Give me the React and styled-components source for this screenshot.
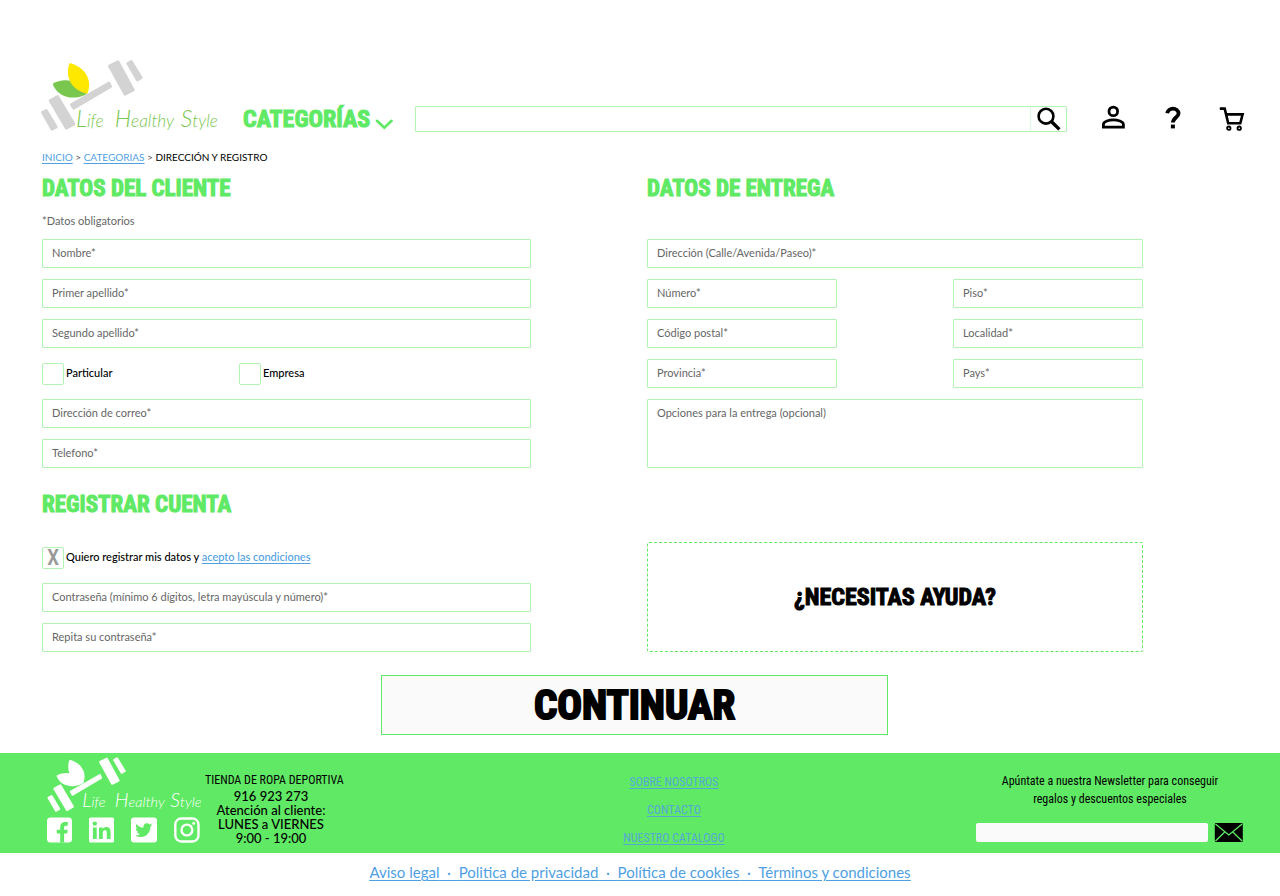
import React from "react";
import styled, { createGlobalStyle, css } from "styled-components";

const green = "#60e964";
const fieldGreen = "#b2f4b4";
const blue = "#4f9fe3";
const condensed = '"Roboto Condensed", "Liberation Sans Narrow", "Liberation Sans", sans-serif';

const GlobalStyle = createGlobalStyle`
  * { box-sizing: border-box; }
  body {
    margin: 0;
    background: #fff;
    color: #000;
    font-family: Lato, "Liberation Sans", sans-serif;
    font-size: 12px;
  }
  h2, p { margin: 0; }
  button { font: inherit; color: inherit; cursor: pointer; }
`;

const heavy = css`
  font-family: ${condensed};
  font-weight: 700;
  -webkit-text-stroke: 1px currentColor;
`;

const Header = styled.header`
  display: flex;
  align-items: flex-end;
  padding: 58px 35px 0 40px;
`;

const LogoLink = styled.a`
  display: block;
  line-height: 0;
`;

const CategoryButton = styled.button`
  ${heavy}
  display: flex;
  align-items: center;
  justify-content: space-between;
  width: 150px;
  height: 28px;
  margin: 0 22px 0 23px;
  padding: 0;
  border: 0;
  background: none;
  color: ${green};
  font-size: 24px;
  line-height: 28px;
`;

const SearchForm = styled.form`
  display: flex;
  flex: 1;
  height: 26px;
  margin: 0 34px 1px 0;
  border: 1px solid ${fieldGreen};
  border-radius: 1px;
`;

const SearchInput = styled.input`
  flex: 1;
  min-width: 0;
  padding: 0 9px;
  border: 0;
  background: none;
  font: inherit;
`;

const SearchButton = styled.button`
  width: 36px;
  padding: 0;
  border: 0;
  border-left: 1px solid #dcfadd;
  background: none;
  line-height: 0;
`;

const UserNav = styled.nav`
  display: flex;
  justify-content: space-between;
  width: 144px;
  height: 28px;
`;

const IconLink = styled.a`
  color: #000;
  line-height: 0;
`;

const Breadcrumb = styled.nav`
  padding: 17px 42px 9px;
  font-size: 10px;
  line-height: 14px;
  color: #555;
`;

const TextLink = styled.a`
  color: ${blue};
  text-decoration: underline;
  text-underline-offset: 2px;
`;

const Current = styled.span`
  color: #000;
`;

const Columns = styled.main`
  display: grid;
  grid-template-columns: 489fr 496fr;
  column-gap: 116px;
  padding: 0 137px 0 42px;
`;

const Column = styled.section`
  display: flex;
  flex-direction: column;
`;

const Title = styled.h2`
  ${heavy}
  height: 32px;
  color: ${green};
  font-size: 23px;
  line-height: 32px;
  white-space: nowrap;
`;

const Hint = styled.p`
  height: 34px;
  padding-top: 7px;
  color: #666;
  font-size: 11px;
  line-height: 18px;
`;

const Fields = styled.div`
  display: grid;
  grid-template-columns: ${(p) => (p.$split ? "1fr 1fr" : "1fr")};
  gap: 11px 116px;
  margin-bottom: ${(p) => p.$after || 0}px;
`;

const RegisterFields = styled(Fields)`
  padding-top: 22px;
`;

const Field = styled.input`
  width: 100%;
  height: 29px;
  padding: 0 9px 2px;
  border: 1px solid ${fieldGreen};
  border-radius: 1px;
  background: #fff;
  font: inherit;
  font-size: 11px;
  grid-column: ${(p) => (p.$wide ? "1 / -1" : "auto")};
  &::placeholder { color: #666; opacity: 1; }
`;

const Notes = styled(Field)`
  display: block;
  height: 69px;
  padding: 5px 9px;
  line-height: 16px;
  resize: none;
`;

const Choices = styled.div`
  display: flex;
  align-items: center;
  height: 29px;
`;

const Choice = styled.label`
  display: flex;
  align-items: center;
  gap: 2px;
  min-width: 197px;
  font-size: 11px;
  font-weight: 500;
  white-space: nowrap;
`;

const ChoiceText = styled.span`
  padding-bottom: 2px;
`;

const Check = styled.input`
  display: grid;
  place-items: center;
  width: 22px;
  height: 22px;
  margin: 0;
  border: 1px solid ${fieldGreen};
  border-radius: 2px;
  appearance: none;
  &:checked::before {
    content: "X";
    color: #999;
    font: 500 22px/20px ${condensed};
  }
`;

const Help = styled.button`
  ${heavy}
  height: 110px;
  border: 1px dashed ${green};
  border-radius: 2px;
  background: #fff;
  color: #000;
  font-size: 24px;
`;

const Actions = styled.div`
  display: grid;
  grid-template-columns: 381fr 507fr 392fr;
  padding: 23px 0 18px;
`;

const Continue = styled.button`
  ${heavy}
  grid-column: 2;
  height: 60px;
  padding: 0;
  border: 1px solid ${green};
  background: #fafafa;
  font-size: 41px;
  line-height: 58px;
  -webkit-text-stroke-width: 2px;
`;

const Footer = styled.footer`
  display: grid;
  grid-template-columns: 574fr 200fr 506fr;
  height: 100px;
  background: ${green};
`;

const Brand = styled.div`
  display: flex;
  gap: 5px;
  padding: 4px 0 0 47px;
`;

const BrandMarks = styled.div`
  display: flex;
  flex-direction: column;
  gap: 4px;
  width: 153px;
`;

const Social = styled.div`
  display: flex;
  justify-content: space-between;
`;

const Store = styled.address`
  width: 132px;
  padding-top: 14px;
  font-size: 13px;
  font-style: normal;
  font-weight: 500;
  line-height: 14px;
  text-align: center;
  white-space: nowrap;
`;

const StoreName = styled.p`
  font-family: ${condensed};
  font-size: 12px;
  font-weight: 400;
  line-height: 18px;
`;

const SiteLinks = styled.nav`
  display: flex;
  flex-direction: column;
  align-items: center;
  gap: 10px;
  padding-top: 20px;
  font-family: ${condensed};
  font-size: 12px;
  line-height: 18px;
`;

const SiteLink = styled(TextLink)`
  color: #56a8d4;
`;

const Newsletter = styled.form`
  display: flex;
  flex-direction: column;
  justify-self: end;
  width: 268px;
  margin-right: 36px;
  padding-top: 19px;
`;

const NewsletterLabel = styled.label`
  height: 51px;
  font-family: ${condensed};
  font-size: 12px;
  line-height: 18px;
  text-align: center;
`;

const NewsletterRow = styled.div`
  display: flex;
  gap: 6px;
`;

const MailInput = styled.input`
  flex: 1;
  min-width: 0;
  height: 19px;
  padding: 0 6px;
  border: 0;
  border-radius: 2px;
  background: #fafafa;
  font: inherit;
`;

const MailButton = styled.button`
  padding: 0;
  border: 0;
  background: none;
  line-height: 0;
`;

const Legal = styled.nav`
  padding: 8px 0 12px;
  color: ${blue};
  font-size: 15px;
  line-height: 22px;
  text-align: center;
  text-decoration: underline;
  text-underline-offset: 2px;
  white-space: pre;
`;

const Script = styled.text`
  font-family: Lato, "Liberation Sans", sans-serif;
  font-size: 52px;
  font-style: italic;
  font-weight: 300;
`;

function Word({ x, cap, rest }) {
  return (
    <Script x={x} y="231">
      <tspan fontSize="70">{cap}</tspan>
      <tspan>{rest}</tspan>
    </Script>
  );
}

function Lettering() {
  return (
    <>
      <Word x="138" cap="L" rest="ife" />
      <Word x="254" cap="H" rest="ealthy" />
      <Word x="452" cap="S" rest="tyle" />
    </>
  );
}

function Dumbbell({ metal, leaf, petal }) {
  return (
    <g>
      <g fill={metal} stroke={metal} strokeWidth="8" strokeLinejoin="round">
        <path d="M37 187 49 181 79 231 66 238Z" />
        <path d="M60 152 83 139 132 222 109 235Z" />
        <path d="M124 164 237 99 242 110 131 175Z" />
        <path d="M238 48 264 35 310 120 285 133Z" />
        <path d="M293 40 304 34 334 83 322 90Z" />
      </g>
      <path fill={leaf} d="M68 102 C98 82 150 88 171 131 C135 153 84 145 68 102Z" />
      <path fill={petal} d="M119 39 C162 50 190 88 172 131 C124 121 103 80 119 39Z" />
    </g>
  );
}

function HeaderLogo() {
  return (
    <svg width="180" height="75" viewBox="30 24 540 225" role="img" aria-label="Life Healthy Style">
      <Dumbbell metal="#d3d3d3" leaf="#7ac74f" petal="#ffe800" />
      <g fill="#7ac74f">
        <Lettering />
      </g>
    </svg>
  );
}

function FooterLogo() {
  return (
    <svg width="154" height="56" viewBox="51 21 462 168" role="img" aria-label="Life Healthy Style">
      <g transform="translate(27 -1) scale(0.77)">
        <Dumbbell metal="#fff" leaf="#fff" petal="#fff" />
      </g>
      <g fill="#fff" transform="translate(41 -22) scale(0.84)">
        <Lettering />
      </g>
    </svg>
  );
}

const SearchIcon = () => (
  <svg width="24" height="24" viewBox="0 0 24 24" fill="none" stroke="#000" aria-hidden="true">
    <circle cx="9" cy="9.2" r="7.4" strokeWidth="2.6" />
    <path d="M14.6 14.8 22.4 22.4" strokeWidth="3.4" />
  </svg>
);

const PersonIcon = () => (
  <svg width="26" height="26" viewBox="0 0 26 26" fill="none" stroke="#000" strokeWidth="2.8" aria-hidden="true">
    <circle cx="12.3" cy="6.4" r="4.3" />
    <path d="M2.4 22.2H22.4V19.4C22.4 16.2 16.4 14.9 12.4 14.9C8.4 14.9 2.4 16.2 2.4 19.4Z" />
  </svg>
);

const QuestionIcon = () => (
  <svg width="26" height="26" viewBox="0 0 26 26" fill="none" stroke="#000" strokeWidth="3.8" aria-hidden="true">
    <path d="M7.3 8.3A5.7 5.5 0 0 1 18.6 8.3C18.6 12.4 12.9 12.6 12.9 17.6" />
    <path d="M12.9 19.6V23.4" strokeWidth="4" />
  </svg>
);

const CartIcon = () => (
  <svg width="26" height="26" viewBox="0 0 26 26" fill="none" stroke="#000" strokeWidth="2.6" aria-hidden="true">
    <path d="M.8 3.6H5.7L9.2 18.3H21.3L23.6 9.4H7.2" />
    <circle cx="9.8" cy="23.2" r="1.7" strokeWidth="1.8" />
    <circle cx="20.2" cy="23.2" r="1.7" strokeWidth="1.8" />
  </svg>
);

const Chevron = () => (
  <svg width="18" height="24" viewBox="0 0 18 24" fill="none" stroke={green} strokeWidth="2.6" strokeLinecap="round" aria-hidden="true">
    <path d="M2 13.8 9.3 20.8 16.6 13.8" />
  </svg>
);

const FacebookIcon = () => (
  <svg width="25" height="26" viewBox="0 0 25 26" aria-hidden="true">
    <rect y=".5" width="25" height="25" rx="3.5" fill="#fff" />
    <path fill={green} d="M13.2 25.5V16.5H9.8V12.7H13.2V10.1C13.2 6.7 15.2 5.1 18.2 5.1H20.8V8.7H18.9C17.5 8.7 17.1 9.3 17.1 10.5V12.7H20.7L20.2 16.5H17.1V25.5Z" />
  </svg>
);

const LinkedinIcon = () => (
  <svg width="25" height="26" viewBox="0 0 25 26" aria-hidden="true">
    <rect y=".5" width="25" height="25" rx="1.5" fill="#fff" />
    <g fill={green}>
      <circle cx="5.8" cy="6.6" r="2.2" />
      <path d="M3.9 10.4H7.7V22H3.9ZM10 10.4H13.6V12C14.3 10.8 15.7 10.1 17.3 10.1C20.8 10.1 21.6 12.4 21.6 15.6V22H17.8V16.3C17.8 14.7 17.7 13.3 15.9 13.3C14.1 13.3 13.8 14.7 13.8 16.2V22H10Z" />
    </g>
  </svg>
);

const TwitterIcon = () => (
  <svg width="26" height="26" viewBox="0 0 26 26" aria-hidden="true">
    <rect y=".5" width="26" height="25" rx="3" fill="#fff" />
    <path fill={green} d="M21.4 8.1C20.8 8.4 20.1 8.6 19.4 8.7C20.1 8.2 20.7 7.5 21 6.6C20.3 7 19.5 7.3 18.7 7.5C18 6.7 17.1 6.3 16 6.3C13.6 6.3 12 8.4 12.6 10.6C9.7 10.5 7.1 9.1 5.3 6.9C4.4 8.5 4.9 10.6 6.4 11.6C5.8 11.6 5.3 11.4 4.8 11.2C4.8 12.8 5.9 14.3 7.6 14.7C7.1 14.8 6.6 14.9 6.1 14.8C6.5 16.1 7.8 17.1 9.3 17.1C7.9 18.2 6.1 18.7 4.3 18.5C5.8 19.4 7.6 20 9.5 20C15.8 20 19.5 14.6 19.3 9.9C20.1 9.5 20.8 8.9 21.4 8.1Z" />
  </svg>
);

const InstagramIcon = () => (
  <svg width="26" height="26" viewBox="0 0 26 26" fill="none" stroke="#fff" strokeWidth="2.4" aria-hidden="true">
    <rect x="1.3" y="1.5" width="23.2" height="23" rx="6" />
    <circle cx="12.9" cy="13" r="5.4" />
    <circle cx="19.7" cy="6.3" r="1.5" fill="#fff" stroke="none" />
  </svg>
);

const MailIcon = () => (
  <svg width="30" height="19" viewBox="0 0 30 19" aria-hidden="true">
    <rect x=".8" width="28" height="19" rx="1" fill="#000" />
    <path d="M1.5 1 14.8 12 28.1 1M1.5 18 11 8.8M28.1 18 18.6 8.8" fill="none" stroke={green} strokeWidth="1.3" />
  </svg>
);

const Entry = ({ label, ...rest }) => <Field type="text" placeholder={label} aria-label={label} {...rest} />;

const Option = ({ children, ...rest }) => (
  <Choice>
    <Check type="checkbox" {...rest} />
    <ChoiceText>{children}</ChoiceText>
  </Choice>
);

export default function App() {
  return (
    <>
      <GlobalStyle />
      <Header>
        <LogoLink href="#inicio"><HeaderLogo /></LogoLink>
        <CategoryButton type="button">CATEGORÍAS<Chevron /></CategoryButton>
        <SearchForm role="search">
          <SearchInput type="search" aria-label="Buscar" />
          <SearchButton type="button" aria-label="Buscar"><SearchIcon /></SearchButton>
        </SearchForm>
        <UserNav>
          <IconLink href="#cuenta" aria-label="Cuenta"><PersonIcon /></IconLink>
          <IconLink href="#ayuda" aria-label="Ayuda"><QuestionIcon /></IconLink>
          <IconLink href="#carrito" aria-label="Carrito"><CartIcon /></IconLink>
        </UserNav>
      </Header>

      <Breadcrumb>
        <TextLink href="#inicio">INICIO</TextLink>{" > "}
        <TextLink href="#categorias">CATEGORIAS</TextLink>{" > "}
        <Current>DIRECCIÓN Y REGISTRO</Current>
      </Breadcrumb>

      <Columns>
        <Column>
          <Title>DATOS DEL CLIENTE</Title>
          <Hint>*Datos obligatorios</Hint>
          <Fields $after={21}>
            <Entry label="Nombre*" />
            <Entry label="Primer apellido*" />
            <Entry label="Segundo apellido*" />
            <Choices>
              <Option>Particular</Option>
              <Option>Empresa</Option>
            </Choices>
            <Entry label="Dirección de correo*" />
            <Entry label="Telefono*" />
          </Fields>
          <Title>REGISTRAR CUENTA</Title>
          <RegisterFields>
            <Choices>
              <Option defaultChecked>
                Quiero registrar mis datos y <TextLink href="#condiciones">acepto las condiciones</TextLink>
              </Option>
            </Choices>
            <Entry type="password" label="Contraseña (mínimo 6 dígitos, letra mayúscula y número)*" />
            <Entry type="password" label="Repita su contraseña*" />
          </RegisterFields>
        </Column>
        <Column>
          <Title>DATOS DE ENTREGA</Title>
          <Hint />
          <Fields $split $after={74}>
            <Entry label="Dirección (Calle/Avenida/Paseo)*" $wide />
            <Entry label="Número*" />
            <Entry label="Piso*" />
            <Entry label="Código postal*" />
            <Entry label="Localidad*" />
            <Entry label="Provincia*" />
            <Entry label="Pays*" />
            <Notes as="textarea" $wide placeholder="Opciones para la entrega (opcional)" aria-label="Opciones para la entrega (opcional)" />
          </Fields>
          <Help type="button">¿NECESITAS AYUDA?</Help>
        </Column>
      </Columns>

      <Actions>
        <Continue type="button">CONTINUAR</Continue>
      </Actions>

      <Footer>
        <Brand>
          <BrandMarks>
            <FooterLogo />
            <Social>
              <IconLink href="#facebook" aria-label="Facebook"><FacebookIcon /></IconLink>
              <IconLink href="#linkedin" aria-label="LinkedIn"><LinkedinIcon /></IconLink>
              <IconLink href="#twitter" aria-label="Twitter"><TwitterIcon /></IconLink>
              <IconLink href="#instagram" aria-label="Instagram"><InstagramIcon /></IconLink>
            </Social>
          </BrandMarks>
          <Store>
            <StoreName>TIENDA DE ROPA DEPORTIVA</StoreName>
            916 923 273<br />Atención al cliente:<br />LUNES a VIERNES<br />9:00 - 19:00
          </Store>
        </Brand>
        <SiteLinks>
          <SiteLink href="#nosotros">SOBRE NOSOTROS</SiteLink>
          <SiteLink href="#contacto">CONTACTO</SiteLink>
          <SiteLink href="#catalogo">NUESTRO CATALOGO</SiteLink>
        </SiteLinks>
        <Newsletter>
          <NewsletterLabel htmlFor="correo">
            Apúntate a nuestra Newsletter para conseguir<br />regalos y descuentos especiales
          </NewsletterLabel>
          <NewsletterRow>
            <MailInput id="correo" type="email" />
            <MailButton type="button" aria-label="Enviar"><MailIcon /></MailButton>
          </NewsletterRow>
        </Newsletter>
      </Footer>

      <Legal>
        <TextLink href="#aviso">Aviso legal</TextLink>{"  ·  "}
        <TextLink href="#privacidad">Politica de privacidad</TextLink>{"  ·  "}
        <TextLink href="#cookies">Política de cookies</TextLink>{"  ·  "}
        <TextLink href="#terminos">Términos y condiciones</TextLink>
      </Legal>
    </>
  );
}
